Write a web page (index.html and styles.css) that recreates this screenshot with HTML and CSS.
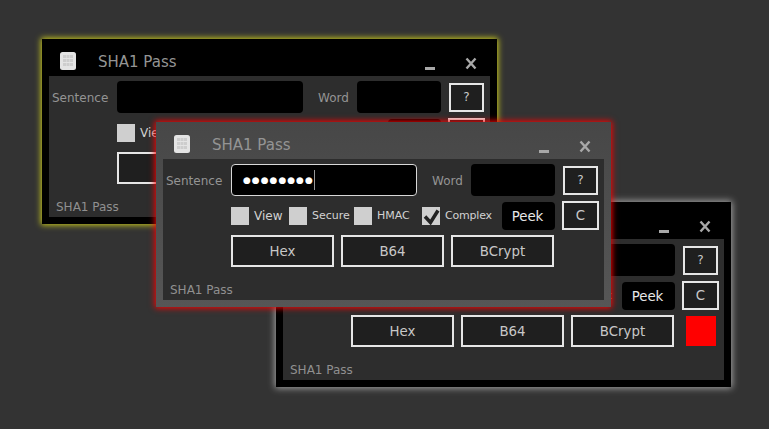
FILE: index.html
```html
<!DOCTYPE html>
<html lang="en">

<head>
    <meta charset="UTF-8">
    <meta name="viewport" content="width=device-width, initial-scale=1.0">
    <title>SHA1 Pass</title>
    <link rel="stylesheet" href="styles.css">
</head>

<body>

    <!-- back window, yellow glow -->
    <div class="window window-yellow">
        <div class="titlebar">
            <svg class="app-icon" viewBox="0 0 16 18"><rect width="16" height="18" rx="2.5" fill="#e4e4e4"/><path d="M3 3h3v3H3zM6.500 3h3v3h-3zM10 3h3v3h-3zM3 7h3v3H3zM6.500 7h3v3h-3zM10 7h3v3h-3zM3 11h3v3H3zM6.500 11h3v3h-3zM10 11h3v3h-3z" fill="#cdcdcd"/></svg>
            <span class="title">SHA1 Pass</span>
            <span class="minimize"></span>
            <svg class="close" viewBox="0 0 12 13"><path d="M1.5 1.5l9 10M10.500 1.500l-9 10" stroke="#a8a8a8" stroke-width="2.400" fill="none"/></svg>
        </div>
        <div class="pane">
            <div class="row row-top">
                <label class="field-label sentence-label">Sentence</label>
                <div class="text-box sentence-box"></div>
                <label class="field-label word-label">Word</label>
                <div class="text-box word-box"></div>
                <button class="btn btn-help">?</button>
            </div>
            <div class="row row-options">
                <label class="check check-view"><span class="box"></span><span class="check-text-lg">View</span></label>
                <label class="check check-secure"><span class="box"></span>Secure</label>
                <label class="check check-hmac"><span class="box"></span>HMAC</label>
                <label class="check check-complex"><span class="box"><svg viewBox="0 0 18 18"><path d="M3 9.500l5.500 6 7.500-12" stroke="#222" stroke-width="3.500" fill="none"/></svg></span>Complex</label>
                <button class="peek">Peek</button>
                <button class="btn btn-clear">C</button>
            </div>
            <div class="row row-actions">
                <button class="btn btn-action">Hex</button>
                <button class="btn btn-action">B64</button>
                <button class="btn btn-action">BCrypt</button>
            </div>
            <div class="status">SHA1 Pass</div>
        </div>
    </div>

    <!-- front-right window, white glow, has the red indicator -->
    <div class="window window-white">
        <div class="titlebar">
            <svg class="app-icon" viewBox="0 0 16 18"><rect width="16" height="18" rx="2.5" fill="#e4e4e4"/><path d="M3 3h3v3H3zM6.500 3h3v3h-3zM10 3h3v3h-3zM3 7h3v3H3zM6.500 7h3v3h-3zM10 7h3v3h-3zM3 11h3v3H3zM6.500 11h3v3h-3zM10 11h3v3h-3z" fill="#cdcdcd"/></svg>
            <span class="title">SHA1 Pass</span>
            <span class="minimize"></span>
            <svg class="close" viewBox="0 0 12 13"><path d="M1.5 1.5l9 10M10.500 1.500l-9 10" stroke="#a8a8a8" stroke-width="2.400" fill="none"/></svg>
        </div>
        <div class="pane">
            <div class="row row-top">
                <label class="field-label sentence-label">Sentence</label>
                <div class="text-box sentence-box"></div>
                <label class="field-label word-label">Word</label>
                <div class="text-box word-box"></div>
                <button class="btn btn-help">?</button>
            </div>
            <div class="row row-options">
                <label class="check check-view"><span class="box"></span><span class="check-text-lg">View</span></label>
                <label class="check check-secure"><span class="box"></span>Secure</label>
                <label class="check check-hmac"><span class="box"></span>HMAC</label>
                <label class="check check-complex"><span class="box"><svg viewBox="0 0 18 18"><path d="M3 9.500l5.500 6 7.500-12" stroke="#222" stroke-width="3.500" fill="none"/></svg></span>Complex</label>
                <button class="peek">Peek</button>
                <button class="btn btn-clear">C</button>
            </div>
            <div class="row row-actions">
                <button class="btn btn-action">Hex</button>
                <button class="btn btn-action">B64</button>
                <button class="btn btn-action">BCrypt</button>
                <span class="indicator"></span>
            </div>
            <div class="status">SHA1 Pass</div>
        </div>
    </div>

    <!-- focused window, red glow -->
    <div class="window window-red">
        <div class="titlebar">
            <svg class="app-icon" viewBox="0 0 16 18"><rect width="16" height="18" rx="2.5" fill="#e4e4e4"/><path d="M3 3h3v3H3zM6.500 3h3v3h-3zM10 3h3v3h-3zM3 7h3v3H3zM6.500 7h3v3h-3zM10 7h3v3h-3zM3 11h3v3H3zM6.500 11h3v3h-3zM10 11h3v3h-3z" fill="#cdcdcd"/></svg>
            <span class="title">SHA1 Pass</span>
            <span class="minimize"></span>
            <svg class="close" viewBox="0 0 12 13"><path d="M1.5 1.5l9 10M10.500 1.500l-9 10" stroke="#a8a8a8" stroke-width="2.400" fill="none"/></svg>
        </div>
        <div class="pane">
            <div class="row row-top">
                <label class="field-label sentence-label">Sentence</label>
                <div class="text-box sentence-box focused"><span class="dots">●●●●●●●●</span><span class="caret"></span></div>
                <label class="field-label word-label">Word</label>
                <div class="text-box word-box"></div>
                <button class="btn btn-help">?</button>
            </div>
            <div class="row row-options">
                <label class="check check-view"><span class="box"></span><span class="check-text-lg">View</span></label>
                <label class="check check-secure"><span class="box"></span>Secure</label>
                <label class="check check-hmac"><span class="box"></span>HMAC</label>
                <label class="check check-complex"><span class="box"><svg viewBox="0 0 18 18"><path d="M3 9.500l5.500 6 7.500-12" stroke="#222" stroke-width="3.500" fill="none"/></svg></span>Complex</label>
                <button class="peek">Peek</button>
                <button class="btn btn-clear">C</button>
            </div>
            <div class="row row-actions">
                <button class="btn btn-action">Hex</button>
                <button class="btn btn-action">B64</button>
                <button class="btn btn-action">BCrypt</button>
            </div>
            <div class="status">SHA1 Pass</div>
        </div>
    </div>

</body>

</html>
```

FILE: styles.css
```css
body {
    font-family: "DejaVu Sans", sans-serif;
    background-color: #333333;
    margin: 0;
    padding: 0;
    width: 769px;
    height: 429px;
    overflow: hidden;
    position: relative;
}

.window {
    position: absolute;
    width: 455px;
    height: 185px;
    box-sizing: border-box;
    padding: 0 7px 7px;
    display: flex;
    flex-direction: column;
    background-color: #000;
}

.window-yellow {
    left: 42px;
    top: 39px;
    box-shadow: 0 0 6px 1px #cccc1c;
}

.window-white {
    left: 276px;
    top: 202px;
    box-shadow: 0 0 7px 1px #a8a8a8;
}

.window-red {
    left: 156px;
    top: 122px;
    background: linear-gradient(#474747, #565656);
    box-shadow: 0 0 6px 1px #ff0000;
}

.titlebar {
    height: 37px;
    flex: none;
    display: flex;
    align-items: center;
    padding: 7px 0 0 11px;
    box-sizing: border-box;
}

.app-icon {
    width: 16px;
    height: 18px;
}

.title {
    font-size: 15px;
    color: #949494;
    margin-left: 22px;
    padding-top: 1px;
    flex: 1;
}

.minimize {
    width: 10px;
    height: 3px;
    margin-top: 14px;
    background-color: #a8a8a8;
}

.close {
    width: 12px;
    height: 13px;
    margin: 5px 13px 0 30px;
}

.pane {
    flex: 1;
    display: flex;
    flex-direction: column;
    background-color: #2d2d2d;
    padding-top: 5px;
    box-sizing: border-box;
}

.row {
    display: flex;
    align-items: center;
}

.row-top {
    height: 32px;
    padding-left: 3px;
}

.field-label {
    font-size: 12px;
    color: #949494;
    padding-top: 2px;
}

.sentence-label {
    width: 65px;
}

.word-label {
    width: 39px;
    margin-left: 15px;
}

.text-box {
    height: 32px;
    box-sizing: border-box;
    background-color: #000;
    border-radius: 4px;
    display: flex;
    align-items: center;
}

.sentence-box {
    width: 186px;
}

.word-box {
    width: 84px;
}

.focused {
    border: 1px solid #d8d8d8;
    padding-left: 11px;
}

.dots {
    color: #fff;
    font-size: 9px;
    letter-spacing: 1px;
    line-height: 20px;
}

.caret {
    width: 1px;
    height: 20px;
    background-color: #999;
}

.btn {
    box-sizing: border-box;
    border: 2px solid #e6e6e6;
    background-color: #1f1f1f;
    color: #c8c8c8;
    font-family: "DejaVu Sans", sans-serif;
    padding: 0;
}

.btn-help {
    width: 35px;
    height: 29px;
    margin-left: 8px;
    font-size: 12px;
}

.row-options {
    height: 29px;
    margin-top: 5px;
    padding-left: 68px;
}

.check {
    display: flex;
    align-items: center;
    gap: 5px;
    font-size: 11px;
    color: #d2d2d2;
    box-sizing: border-box;
}

.check-text-lg {
    font-size: 12px;
    padding-top: 1px;
}

.check-view {
    width: 58px;
}

.check-secure {
    width: 65px;
}

.check-hmac {
    width: 68px;
}

.check-complex {
    width: 80px;
    letter-spacing: -0.2px;
}

.box {
    width: 18px;
    height: 18px;
    flex: none;
    background-color: #cfcfcf;
}

.box svg {
    display: block;
}

.peek {
    width: 53px;
    height: 28px;
    margin-top: 1px;
    border: none;
    border-radius: 4px;
    background-color: #000;
    color: #e8e8e8;
    font-family: "DejaVu Sans", sans-serif;
    font-size: 13.330px;
    padding: 0 2px 0 0;
}

.btn-clear {
    width: 37px;
    height: 29px;
    margin-left: 7px;
    font-size: 13.330px;
}

.row-actions {
    height: 32px;
    margin-top: 5px;
    padding-left: 68px;
    gap: 7px;
}

.btn-action {
    width: 103px;
    height: 32px;
    font-size: 13.330px;
}

.indicator {
    width: 30px;
    height: 30px;
    margin-left: 5px;
    background-color: #f00;
}

.status {
    margin-top: auto;
    padding: 0 0 3px 7px;
    font-size: 12px;
    color: #909090;
}
```
